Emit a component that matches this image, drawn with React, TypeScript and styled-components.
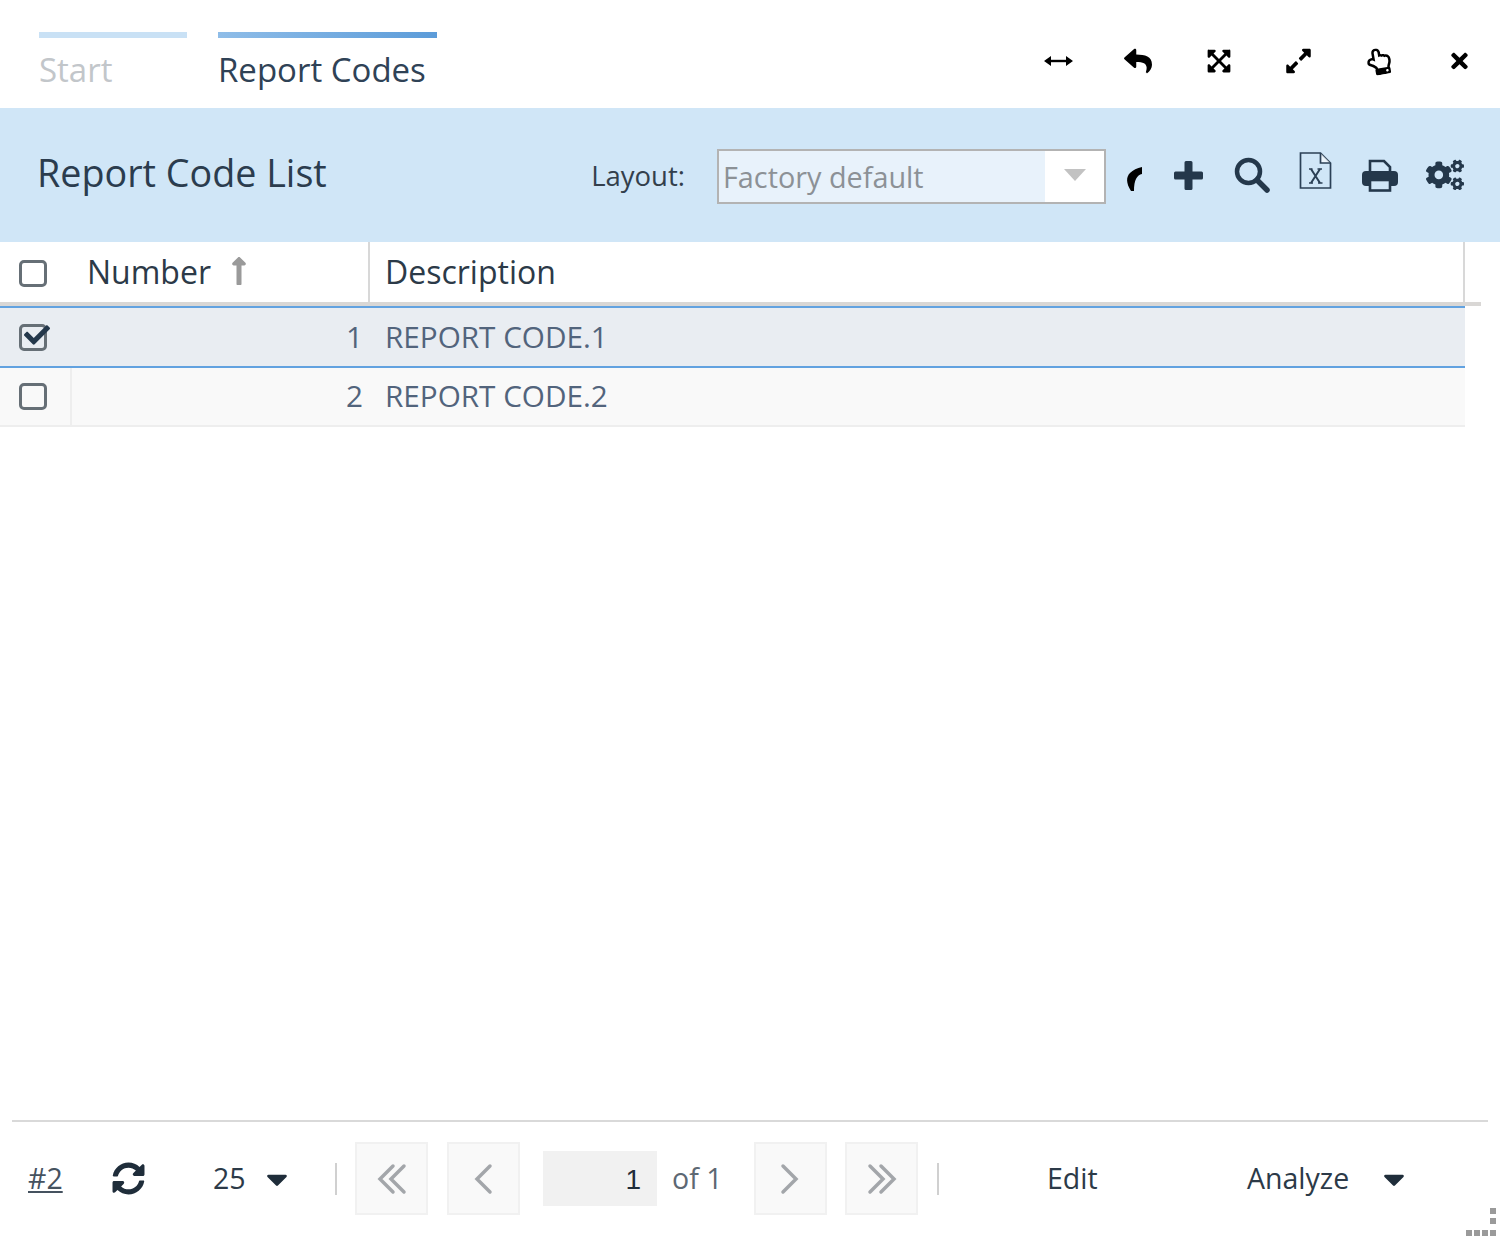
import React from "react";
import styled, { createGlobalStyle } from "styled-components";
import { FaReply, FaExpandArrowsAlt, FaExpandAlt, FaRegHandPointUp, FaTimes, FaCogs, FaCheck, FaSyncAlt, FaCaretDown, FaLongArrowAltUp } from "react-icons/fa";

const Global = createGlobalStyle`
  html, body { margin: 0; padding: 0; background: #fff; }
  body { font-family: "Open Sans", "Noto Sans", sans-serif; color: #2c3d4f; }
`;

const Page = styled.div`
  position: relative;
  width: 1500px;
  height: 1236px;
  display: flex;
  flex-direction: column;
  overflow: hidden;
`;

const TopBar = styled.div`
  height: 108px;
  display: flex;
  align-items: flex-start;
  padding: 32px 31px 0 39px;
  box-sizing: border-box;
`;

const Tab = styled.div<{ $w: number; $active?: boolean }>`
  width: ${(p) => p.$w}px;
  margin-right: 31px;
  font-size: 33px;
  line-height: 44px;
  color: ${(p) => (p.$active ? "#2f4256" : "#c2c6ca")};
  &::before {
    content: "";
    display: block;
    height: 6px;
    margin-bottom: 10px;
    background: ${(p) => (p.$active ? "linear-gradient(90deg, #8fbde8, #5c9cd9)" : "#c9e1f5")};
  }
`;

const WindowTools = styled.div`
  margin-left: auto;
  display: flex;
  align-items: center;
  height: 58px;
  color: #000;
`;

const ToolSlot = styled.span<{ $w: number; $gap: number; $shift?: number }>`
  width: ${(p) => p.$w}px;
  margin-left: ${(p) => p.$gap}px;
  margin-top: ${(p) => p.$shift ?? 0}px;
  display: flex;
  align-items: center;
  justify-content: center;
`;

const ListHeader = styled.div`
  height: 134px;
  background: #d0e6f7;
  display: flex;
  align-items: center;
  padding: 0 36px 0 37px;
  box-sizing: border-box;
`;

const Title = styled.h1`
  margin: 0 0 5px;
  font-size: 37.7px;
  font-weight: 400;
  color: #2b3c4e;
`;

const LayoutLabel = styled.span`
  margin-left: auto;
  font-size: 27.5px;
  color: #333f4c;
`;

const Select = styled.div`
  margin-left: 32px;
  width: 389px;
  height: 55px;
  box-sizing: border-box;
  border: 2px solid #b3b3b3;
  background: #fff;
  display: flex;
  margin-top: 2px;
`;

const SelectValue = styled.div`
  width: 326px;
  background: #e8f2fb;
  color: #8c9196;
  font-size: 28.8px;
  line-height: 52px;
  padding-left: 4px;
  box-sizing: border-box;
`;

const SelectArrow = styled.div`
  flex: 1;
  display: flex;
  align-items: center;
  justify-content: center;
  &::after {
    content: "";
    border-left: 11px solid transparent;
    border-right: 11px solid transparent;
    border-top: 12px solid #c2c2c2;
    margin-top: -2px;
  }
`;

const ListTools = styled.div`
  display: flex;
  align-items: center;
  color: #24384b;
`;

const TableHead = styled.div`
  position: relative;
  height: 62px;
  width: 1465px;
  display: flex;
  box-sizing: border-box;
  border-right: 2px solid #d8d8d8;
  font-size: 32px;
  color: #2c3a48;
  &::after {
    content: "";
    position: absolute;
    left: 0;
    bottom: -2px;
    width: 1481px;
    height: 4px;
    background: #d9d7d5;
  }
`;

const CheckCell = styled.div<{ $divider?: boolean }>`
  width: 72px;
  box-sizing: border-box;
  padding-left: 19px;
  display: flex;
  align-items: center;
  border-right: ${(p) => (p.$divider ? "2px solid #eeeeee" : "none")};
`;

const Box = styled.span`
  position: relative;
  display: block;
  width: 28px;
  height: 27px;
  box-sizing: border-box;
  border: 3px solid #666f76;
  border-radius: 5px;
  svg { position: absolute; left: 2px; top: -5px; color: #24384b; }
`;

const NumberHead = styled.div`
  width: 298px;
  box-sizing: border-box;
  padding: 0 0 4px 15px;
  display: flex;
  align-items: center;
  border-right: 2px solid #d8d8d8;
  svg { margin-left: 12px; color: #9a9a9a; }
`;

const DescHead = styled.div`
  padding: 0 0 4px 15px;
  display: flex;
  align-items: center;
`;

const Row = styled.div<{ $selected?: boolean }>`
  width: 1465px;
  height: ${(p) => (p.$selected ? 62 : 59)}px;
  box-sizing: border-box;
  display: flex;
  background: ${(p) => (p.$selected ? "#e9edf2" : "#f9f9f9")};
  border-top: ${(p) => (p.$selected ? "2px solid #62a2e0" : "none")};
  border-bottom: ${(p) => (p.$selected ? "2px solid #62a2e0" : "2px solid #eeeeee")};
  font-size: 29.7px;
  color: #52647c;
  margin-top: ${(p) => (p.$selected ? 2 : 0)}px;
`;

const NumCell = styled.div`
  width: 291px;
  box-sizing: border-box;
  display: flex;
  align-items: center;
  justify-content: flex-end;
  padding-bottom: 2px;
`;

const DescCell = styled.div`
  padding: 0 0 2px 22px;
  display: flex;
  align-items: center;
`;

const Spacer = styled.div`
  flex: 1;
`;

const Footer = styled.div`
  margin: 0 12px;
  height: 116px;
  border-top: 2px solid #d9d9d9;
  display: flex;
  align-items: center;
  padding: 0 0 1px 16px;
  box-sizing: border-box;
  font-size: 28.5px;
  color: #2c3a48;
`;

const LinkText = styled.a`
  text-decoration: underline;
  color: #45525f;
  width: 84px;
  margin-bottom: 1px;
`;

const Refresh = styled.span`
  width: 101px;
  display: flex;
  color: #1f2d3a;
`;

const PageSize = styled.span`
  width: 47px;
  margin-bottom: 2px;
`;

const CaretIcon = styled(FaCaretDown)`
  color: #1f2d3a;
`;

const Divider = styled.span<{ $l: number; $r: number }>`
  width: 2px;
  height: 32px;
  background: #d0d0d0;
  margin: 0 ${(p) => p.$r}px 0 ${(p) => p.$l}px;
`;

const PageButton = styled.button<{ $gap?: number }>`
  width: 73px;
  height: 73px;
  margin-right: ${(p) => p.$gap ?? 0}px;
  box-sizing: border-box;
  border: 2px solid #f1f1f1;
  background: #f9f9f9;
  display: flex;
  align-items: center;
  justify-content: center;
  padding: 0;
`;

const PageInput = styled.div`
  width: 114px;
  height: 55px;
  background: #f1f1f1;
  box-sizing: border-box;
  text-align: right;
  padding-right: 16px;
  line-height: 57px;
  color: #1f2d3a;
  font-family: "Liberation Sans", sans-serif;
  font-size: 28px;
`;

const OfText = styled.span`
  width: 82px;
  margin: 0 0 2px 15px;
  color: #5d6873;
`;

const EditAction = styled.span`
  margin: 0 0 2px 108px;
  width: 200px;
`;

const AnalyzeAction = styled.span`
  width: 130px;
  margin-bottom: 2px;
`;

const Grip = styled.svg`
  position: absolute;
  right: 2px;
  bottom: 0;
`;

const Chevron = ({ dir, double }: { dir: "l" | "r"; double?: boolean }) => {
  const flip = dir === "l" ? "matrix(-1 0 0 1 34 0)" : double ? undefined : "translate(-2 0)";
  return (
    <svg width="34" height="34" viewBox="0 0 34 34" fill="none" stroke="#a3a6aa" strokeWidth="3.5" strokeLinecap="round">
      <g transform={flip}>
        {double ? (
          <>
            <path d="M5 4l13 13L5 30" />
            <path d="M16 4l13 13-13 13" />
          </>
        ) : (
          <path d="M11 4l13 13-13 13" />
        )}
      </g>
    </svg>
  );
};

const HArrowIcon = () => (
  <svg width="29" height="14" viewBox="0 0 29 14" fill="#000">
    <rect x="4" y="5.8" width="21" height="2.4" />
    <path d="M0 7l7-5v10zM29 7l-7-5v10z" />
  </svg>
);

const PlusIcon = () => (
  <svg width="29" height="29" viewBox="0 0 29 29" fill="#24384b">
    <path d="M10.5 1.5a1.5 1.5 0 0 1 1.5-1.5h5a1.5 1.5 0 0 1 1.5 1.5v9h9a1.5 1.5 0 0 1 1.5 1.5v5a1.5 1.5 0 0 1-1.5 1.5h-9v9a1.5 1.5 0 0 1-1.5 1.5h-5a1.5 1.5 0 0 1-1.5-1.5v-9h-9A1.5 1.5 0 0 1 0 17v-5a1.5 1.5 0 0 1 1.5-1.5h9z" />
  </svg>
);

const SearchIcon = () => (
  <svg width="36" height="36" viewBox="0 0 36 36" fill="none" stroke="#24384b" strokeLinecap="round">
    <circle cx="14.5" cy="14.5" r="11.5" strokeWidth="4.5" />
    <path d="M23 23l10 10" strokeWidth="5.5" />
  </svg>
);

const ExcelIcon = () => (
  <svg width="33" height="37" viewBox="0 0 33 37" fill="none" stroke="#2b4056" strokeWidth="1.7">
    <path d="M1.5 1h20l10 10v25h-30z" />
    <path d="M21.5 1v10h10" fill="#ffffff" fillOpacity="0.6" />
    <path d="M10 17h3.5M18.5 17H23M10 31h4M19 31h4.5" />
    <path d="M12 17l9 14M21 17l-9 14" strokeWidth="2" />
  </svg>
);

const PrintIcon = () => (
  <svg width="36" height="33" viewBox="0 0 36 33">
    <path d="M8 14V2h14l6 6v6" fill="none" stroke="#24384b" strokeWidth="2.6" />
    <rect x="0" y="12" width="36" height="15" rx="4" fill="#24384b" />
    <rect x="8" y="21" width="20" height="10.5" fill="#d0e6f7" stroke="#24384b" strokeWidth="2.6" />
  </svg>
);

const CurveIcon = () => (
  <svg width="16" height="25" viewBox="0 0 16 25">
    <path d="M16 0v7C11 8 8 13 8 24H5C0 16 0 10 4 6 7 3 11 1 16 0z" fill="#000" />
  </svg>
);

const HandTilt = styled(FaRegHandPointUp)`
  transform: rotate(-10deg);
`;

export default function App() {
  return (
    <Page>
      <Global />
      <TopBar>
        <Tab $w={148}>Start</Tab>
        <Tab $w={219} $active>Report Codes</Tab>
        <WindowTools>
          <ToolSlot $w={30} $gap={0}><HArrowIcon /></ToolSlot>
          <ToolSlot $w={30} $gap={50}><FaReply size={28} /></ToolSlot>
          <ToolSlot $w={27} $gap={52}><FaExpandArrowsAlt size={26} /></ToolSlot>
          <ToolSlot $w={27} $gap={53}><FaExpandAlt size={28} /></ToolSlot>
          <ToolSlot $w={26} $gap={54}><HandTilt size={27} /></ToolSlot>
          <ToolSlot $w={19} $gap={58}><FaTimes size={24} /></ToolSlot>
        </WindowTools>
      </TopBar>
      <ListHeader>
        <Title>Report Code List</Title>
        <LayoutLabel>Layout:</LayoutLabel>
        <Select>
          <SelectValue>Factory default</SelectValue>
          <SelectArrow />
        </Select>
        <ListTools>
          <ToolSlot $w={16} $gap={20} $shift={8}><CurveIcon /></ToolSlot>
          <ToolSlot $w={29} $gap={32}><PlusIcon /></ToolSlot>
          <ToolSlot $w={36} $gap={31}><SearchIcon /></ToolSlot>
          <ToolSlot $w={33} $gap={29} $shift={-9}><ExcelIcon /></ToolSlot>
          <ToolSlot $w={36} $gap={30}><PrintIcon /></ToolSlot>
          <ToolSlot $w={38} $gap={28}><FaCogs size={38} /></ToolSlot>
        </ListTools>
      </ListHeader>
      <TableHead>
        <CheckCell><Box /></CheckCell>
        <NumberHead>Number<FaLongArrowAltUp size={32} /></NumberHead>
        <DescHead>Description</DescHead>
      </TableHead>
      <Row $selected>
        <CheckCell><Box><FaCheck size={26} /></Box></CheckCell>
        <NumCell>1</NumCell>
        <DescCell>REPORT CODE.1</DescCell>
      </Row>
      <Row>
        <CheckCell $divider><Box /></CheckCell>
        <NumCell>2</NumCell>
        <DescCell>REPORT CODE.2</DescCell>
      </Row>
      <Spacer />
      <Footer>
        <LinkText>#2</LinkText>
        <Refresh><FaSyncAlt size={33} /></Refresh>
        <PageSize>25</PageSize>
        <CaretIcon size={34} />
        <Divider $l={41} $r={18} />
        <PageButton $gap={19}><Chevron dir="l" double /></PageButton>
        <PageButton $gap={23}><Chevron dir="l" /></PageButton>
        <PageInput>1</PageInput>
        <OfText>of 1</OfText>
        <PageButton $gap={18}><Chevron dir="r" /></PageButton>
        <PageButton><Chevron dir="r" double /></PageButton>
        <Divider $l={19} $r={0} />
        <EditAction>Edit</EditAction>
        <AnalyzeAction>Analyze</AnalyzeAction>
        <CaretIcon size={34} />
      </Footer>
      <Grip width="32" height="30" viewBox="0 0 32 30" fill="#9a9a9a">
        <rect x="0" y="24" width="6" height="6" />
        <rect x="8" y="24" width="6" height="6" />
        <rect x="16" y="24" width="6" height="6" />
        <rect x="24" y="24" width="6" height="6" />
        <rect x="24" y="12" width="6" height="6" />
        <rect x="24" y="2" width="6" height="6" />
      </Grip>
    </Page>
  );
}
